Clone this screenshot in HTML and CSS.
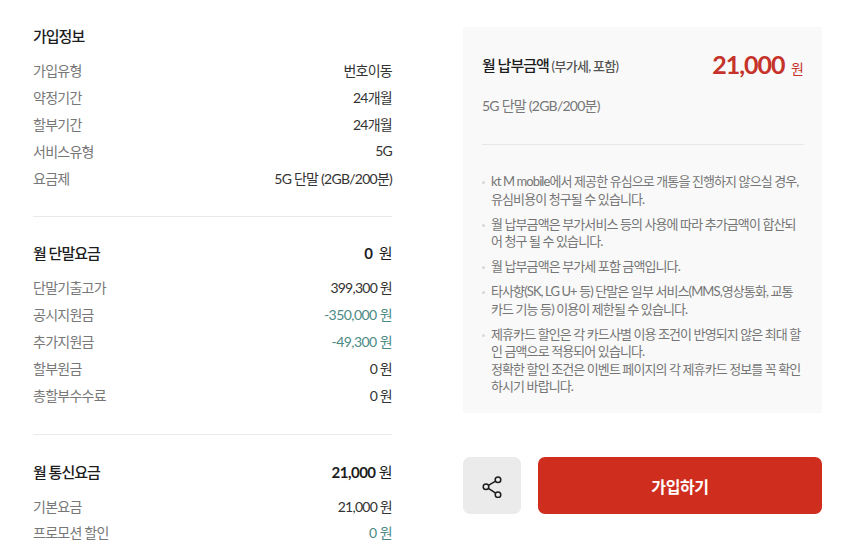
FILE: index.html
```html
<!DOCTYPE html>
<html lang="ko">
<head>
<meta charset="utf-8">
<title>가입정보</title>
<link rel="stylesheet" href="styles.css">
</head>
<body>
<main class="page">
  <div class="details">
    <section class="group">
      <h2 class="group-title first"><span>가입정보</span></h2>
      <div class="row"><span class="label">가입유형</span><span class="value">번호이동</span></div>
      <div class="row"><span class="label">약정기간</span><span class="value">24개월</span></div>
      <div class="row"><span class="label">할부기간</span><span class="value">24개월</span></div>
      <div class="row"><span class="label">서비스유형</span><span class="value">5G</span></div>
      <div class="row"><span class="label">요금제</span><span class="value">5G 단말 (2GB/200분)</span></div>
    </section>
    <section class="group">
      <h2 class="group-title"><span>월 단말요금</span><span class="total">0 <span class="won-gap">원</span></span></h2>
      <div class="row"><span class="label">단말기출고가</span><span class="value">399,300 원</span></div>
      <div class="row"><span class="label">공시지원금</span><span class="value green">-350,000 원</span></div>
      <div class="row"><span class="label">추가지원금</span><span class="value green">-49,300 원</span></div>
      <div class="row"><span class="label">할부원금</span><span class="value">0 원</span></div>
      <div class="row"><span class="label">총할부수수료</span><span class="value">0 원</span></div>
    </section>
    <section class="group last">
      <h2 class="group-title"><span>월 통신요금</span><span class="total">21,000 <span class="won">원</span></span></h2>
      <div class="row"><span class="label">기본요금</span><span class="value">21,000 원</span></div>
      <div class="row"><span class="label">프로모션 할인</span><span class="value green">0 원</span></div>
    </section>
  </div>
  <aside class="side">
    <div class="summary">
      <div class="summary-head">
        <div class="summary-title">월 납부금액 <small>(부가세, 포함)</small></div>
        <div class="price"><strong>21,000</strong> <span>원</span></div>
      </div>
      <p class="plan">5G 단말 (2GB/200분)</p>
      <ul class="notes">
        <li>kt M mobile에서 제공한 유심으로 개통을 진행하지 않으실 경우,<br>유심비용이 청구될 수 있습니다.</li>
        <li>월 납부금액은 부가서비스 등의 사용에 따라 추가금액이 합산되<br>어 청구 될 수 있습니다.</li>
        <li>월 납부금액은 부가세 포함 금액입니다.</li>
        <li>타사향(SK, LG U+ 등) 단말은 일부 서비스(MMS,영상통화, 교통<br>카드 기능 등) 이용이 제한될 수 있습니다.</li>
        <li>제휴카드 할인은 각 카드사별 이용 조건이 반영되지 않은 최대 할<br>인 금액으로 적용되어 있습니다.<br>정확한 할인 조건은 이벤트 페이지의 각 제휴카드 정보를 꼭 확인<br>하시기 바랍니다.</li>
      </ul>
    </div>
    <div class="actions">
      <button class="share" type="button" aria-label="공유">
        <svg width="22" height="24" viewBox="0 0 22 24" fill="none" stroke="#1c1c1c" stroke-width="1.5">
          <circle cx="5" cy="12.7" r="2.8"/>
          <circle cx="17" cy="5.7" r="2.8"/>
          <circle cx="17" cy="20.7" r="2.8"/>
          <path d="M7.4 11.3 14.6 7.1M7.4 14.3 14.7 19.1"/>
        </svg>
      </button>
      <button class="join" type="button">가입하기</button>
    </div>
  </aside>
</main>
</body>
</html>
```
FILE: styles.css
```css
* { box-sizing: border-box; }
html, body { margin: 0; padding: 0; background: #fff; height: 559px; overflow: hidden; }
body {
  font-family: Lato, "Noto Sans CJK KR", sans-serif;
  font-size: 14px;
  letter-spacing: -0.75px;
  color: #333;
}
.page {
  display: flex;
  gap: 71px;
  padding: 26px 28px 0 33px;
}
.details, .side { width: 359px; flex: none; }
.group {
  padding-bottom: 25px;
  margin-bottom: 22px;
  border-bottom: 1px solid #e9e9e9;
}
.group + .group { padding-bottom: 26px; }
.group.last { border-bottom: 0; padding: 1px 0 0; margin-bottom: 0; }
.group-title {
  display: flex;
  justify-content: space-between;
  align-items: center;
  margin: 0 0 8px;
  height: 26px;
  font-size: 15px;
  font-weight: 500;
  letter-spacing: -1px;
  color: #1d1d1d;
}
.group-title.first { height: 18px; margin-bottom: 12px; }
.total { font-weight: 700; letter-spacing: -0.5px; }
.won { font-weight: 400; }
.won-gap { font-weight: 400; margin-left: 3px; }
.row {
  display: flex;
  justify-content: space-between;
  align-items: center;
  height: 27px;
}
.group.last .row + .row { margin-top: -0.6px; }
.label { color: #777; }
.value { color: #333; }
.green { color: #4b8a84; letter-spacing: -0.55px; }

.summary {
  height: 386px;
  margin-top: 1px;
  padding: 20px 18px 0 19px;
  background: #f9f9f9;
}
.summary-head {
  display: flex;
  justify-content: space-between;
  align-items: center;
  height: 34px;
}
.summary-title { font-size: 15px; font-weight: 500; letter-spacing: -1px; color: #1d1d1d; }
.summary-title small { font-size: 13px; font-weight: 500; letter-spacing: -0.7px; color: #555; }
.price { color: #c5332a; font-size: 14px; letter-spacing: 0; }
.price strong { font-size: 25px; font-weight: 700; letter-spacing: -1px; margin-right: 3px; }
.plan {
  margin: 15px 0 0;
  height: 49px;
  color: #777;
  font-size: 14px;
  line-height: 20px;
  border-bottom: 1px solid #e8e8e8;
}
.notes {
  list-style: none;
  margin: 28px 0 0;
  padding: 0;
  font-size: 13px;
  line-height: 17.5px;
  color: #757575;
  letter-spacing: -0.9px;
  white-space: nowrap;
}
.notes li {
  position: relative;
  padding-left: 9px;
  margin-bottom: 7.5px;
}
.notes li::before {
  content: "";
  position: absolute;
  left: 0;
  top: 8px;
  width: 3px;
  height: 3px;
  border-radius: 50%;
  background: #d8d8d8;
}
.actions {
  display: flex;
  gap: 17px;
  margin-top: 44px;
}
.share, .join {
  height: 57px;
  border: 0;
  border-radius: 7px;
  padding: 0;
  font-family: inherit;
}
.share {
  width: 58px;
  background: #ebebeb;
  display: flex;
  align-items: center;
  justify-content: center;
}
.join {
  flex: 1;
  background: #cf2e1f;
  color: #fff;
  font-size: 16px;
  font-weight: 700;
  letter-spacing: -0.4px;
}
```
